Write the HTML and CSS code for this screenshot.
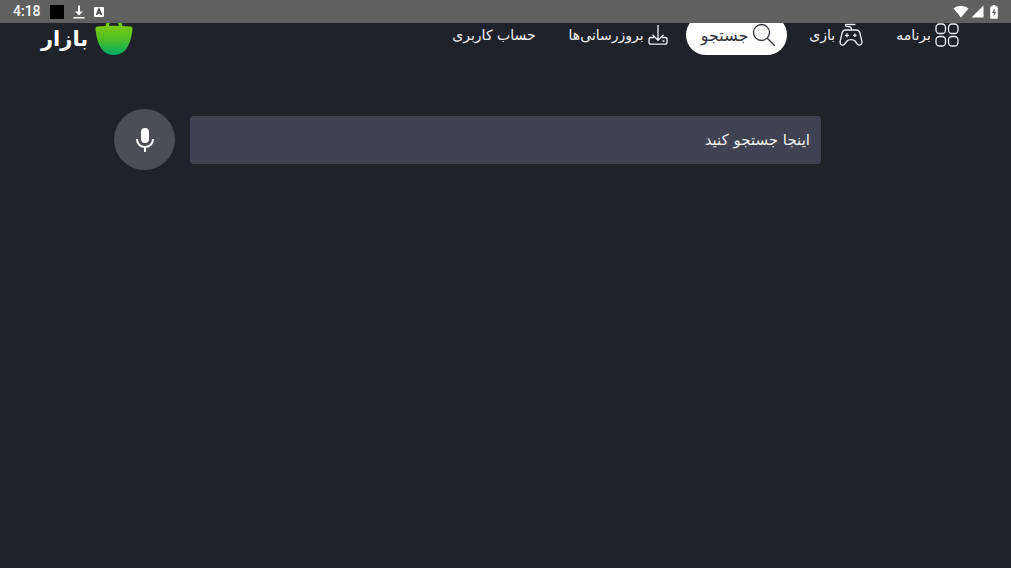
FILE: index.html
```html
<!DOCTYPE html>
<html lang="fa" dir="rtl">
<head>
<meta charset="utf-8">
<meta name="viewport" content="width=device-width, initial-scale=1">
<title>بازار</title>
<link rel="stylesheet" href="styles.css">
</head>
<body>
<div class="status" dir="ltr">
  <div class="status-group">
    <span class="clock">4:18</span>
    <span class="block"></span>
    <svg width="12" height="14" viewBox="0 0 12 14" fill="#fff"><path d="M5 0.500h2v6h3L6 10.500 2 6.500h3zM0.500 12h11v1.600H.5z"/></svg>
    <svg width="10" height="10" viewBox="0 0 10 10"><rect width="10" height="10" rx="1" fill="#fff"/><path d="M2.500 8 5 2l2.500 6M3.500 6h3" fill="none" stroke="#444" stroke-width="1.500"/></svg>
  </div>
  <div class="status-group status-right">
    <svg width="16" height="13" viewBox="0 0 16 13" fill="#fff"><path d="M0.500 3.500C5-.2 11-.2 15.500 3.500L8 12.500z"/></svg>
    <svg width="13" height="13" viewBox="0 0 13 13" fill="#fff"><path d="M12.500.5v12H.5z"/></svg>
    <svg class="battery" width="8" height="14" viewBox="0 0 8 14"><path d="M2.500 0h3v1.300H7c.5 0 .8.300.8.800v10.800c0 .5-.3.800-.8.800H1c-.5 0-.8-.3-.8-.8V2.100c0-.5.300-.8.800-.8h1.500z" fill="#fff"/><path d="M4.700 3 2.200 8h1.500v3.500L6 6.700H4.700z" fill="#606060"/></svg>
  </div>
</div>

<header class="header">
  <nav class="tabs">
    <a class="tab" href="#apps">
      <svg width="24" height="24" viewBox="0 0 24 24" class="line"><rect x="1" y="1" width="9.500" height="9.500" rx="3.500"/><rect x="13.500" y="1" width="9.500" height="9.500" rx="3.500"/><rect x="1" y="13.500" width="9.500" height="9.500" rx="3.500"/><rect x="13.500" y="13.500" width="9.500" height="9.500" rx="3.500"/></svg>
      <span>برنامه</span>
    </a>
    <a class="tab" href="#games">
      <svg width="24" height="24" viewBox="0 0 24 24" class="line"><path d="M16.500 1.500H7.500c-1.500 0-1.500 1.500 0 1.800l3.500.5c1.500.3 1.500 1.200 1.500 3M6.500 7h11c1.700 0 2.700.8 3.300 2.500l2 8.500c.8 3.800-2.500 5.200-4.500 3l-2.300-3c-1.500-1.800-6.500-1.800-8 0L5.700 21c-2 2.200-5.300.8-4.500-3l2-8.500C3.800 7.800 4.800 7 6.500 7z"/><path d="M6 12.300h4M8 10.300v4M14 12.300h3.500M15.800 10.500v3.500"/></svg>
      <span>بازی</span>
    </a>
    <a class="tab tab-active" href="#search" aria-current="page">
      <svg width="24" height="24" viewBox="0 0 24 24" class="line"><circle cx="9.500" cy="9.500" r="8"/><path d="m15.300 15.300 7.500 7.500"/></svg>
      <span>جستجو</span>
    </a>
    <a class="tab" href="#updates">
      <svg width="20" height="20" viewBox="0 0 20 20" class="line"><path d="M10 0v15M4.500 9.800 10 15.300l5.500-5.500M6 12.500H3c-1.400 0-2 .7-2 1.800v3c0 1.200.8 1.900 2 1.900h14c1.200 0 2-.7 2-1.900v-3c0-1.100-.6-1.800-2-1.800h-3"/><path d="M14.500 16h2" stroke-width="1.500"/></svg>
      <span>بروزرسانی‌ها</span>
    </a>
    <a class="tab" href="#account"><span>حساب کاربری</span></a>
  </nav>
  <a class="brand" href="#home">
    <svg width="38" height="36" viewBox="0 0 38 36">
      <defs><linearGradient id="bag" x1="0" y1="0" x2="0" y2="1"><stop offset="0" stop-color="#78c911"/><stop offset=".45" stop-color="#50be22"/><stop offset="1" stop-color="#00ac6a"/></linearGradient></defs>
      <path d="M12.500 9V6c0-6 13-6 13 0v3" fill="none" stroke="#78c911" stroke-width="3.500"/>
      <path d="M2.500 7.500C13 6.500 25 6.500 35.500 7.500c1.600.3 2.200 1.200 2 2.800C36 25 31 36 19 36S2 25 .5 10.300c-.2-1.600.4-2.500 2-2.800z" fill="url(#bag)"/>
    </svg>
    <span class="wordmark">بازار</span>
  </a>
</header>

<main>
  <form class="search">
    <input class="search-input" type="text" aria-label="جستجو" placeholder="اینجا جستجو کنید">
    <button class="mic" type="button" aria-label="جستجوی صوتی">
      <svg width="20" height="26" viewBox="0 0 20 26"><rect x="6" y="1" width="8" height="15" rx="4" fill="#fff"/><path d="M2 12c0 10.500 16 10.500 16 0M10 20v5" fill="none" stroke="#fff" stroke-width="2"/></svg>
    </button>
  </form>
</main>
</body>
</html>
```
FILE: styles.css
```css
* {
  box-sizing: border-box;
}

body {
  margin: 0;
  min-height: 100vh;
  background: #20222a;
  color: #f0f0f2;
  font-family: "DejaVu Sans", "Noto Sans", sans-serif;
  font-size: 15px;
}

svg {
  display: block;
  flex: none;
}

.status {
  position: fixed;
  top: 0;
  left: 0;
  right: 0;
  z-index: 1;
  height: 23px;
  padding: 0 13px;
  display: flex;
  justify-content: space-between;
  align-items: center;
  background: #606060;
  color: #fff;
}

.status-group {
  display: flex;
  align-items: center;
  gap: 9px;
}

.status-right {
  gap: 2px;
}

.battery {
  margin-left: 4px;
}

.clock {
  font: 500 14px/23px Roboto, sans-serif;
}

.block {
  width: 14px;
  height: 14px;
  background: #000;
}

.header {
  display: flex;
  justify-content: space-between;
  padding: 15px 41px 0;
}

.tabs {
  display: flex;
  gap: 7px;
}

.tab {
  display: flex;
  align-items: center;
  gap: 4px;
  height: 40px;
  padding: 0 11px 0 15px;
  border-radius: 20px;
  color: inherit;
  font-size: 14px;
  text-decoration: none;
  white-space: nowrap;
}

.tab-active {
  background: #fff;
  color: #33343c;
  font-size: 16px;
}

.line {
  fill: none;
  stroke: currentColor;
  stroke-width: 1.3;
}

.brand {
  display: flex;
  align-items: flex-end;
  gap: 7px;
  height: 40px;
  color: #fff;
  text-decoration: none;
}

.wordmark {
  font-size: 21px;
  font-weight: 700;
  line-height: 32px;
}

.search {
  display: flex;
  align-items: center;
  gap: 15px;
  padding: 54px 190px 0 114px;
}

.search-input {
  flex: 1;
  min-width: 0;
  height: 48px;
  padding: 0 11px;
  border: 0;
  border-radius: 4px;
  background: #404152;
  color: #f0f0f2;
  font: inherit;
}

.search-input::placeholder {
  color: #f0f0f2;
  opacity: 1;
}

.mic {
  display: flex;
  align-items: center;
  justify-content: center;
  width: 61px;
  height: 61px;
  padding: 0;
  border: 0;
  border-radius: 50%;
  background: #4d4e55;
}
```
